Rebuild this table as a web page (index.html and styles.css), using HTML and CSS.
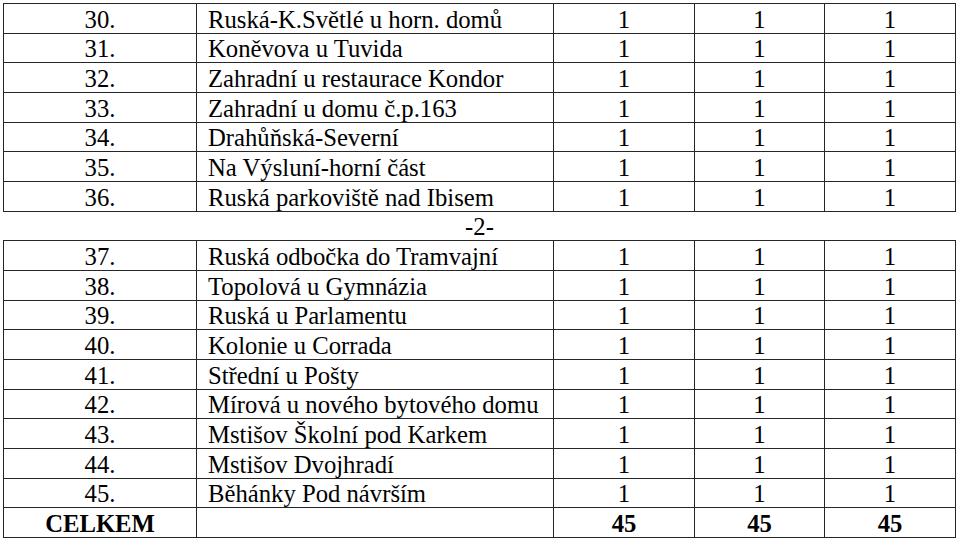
FILE: index.html
```html
<!DOCTYPE html>
<html lang="cs">
<head>
<meta charset="utf-8">
<title>Tabulka</title>
<link rel="stylesheet" href="styles.css">
</head>
<body>
<table class="sheet">
  <colgroup>
    <col class="c-no"><col class="c-name"><col class="c-v"><col class="c-v2"><col class="c-v3">
  </colgroup>
  <tbody>
    <tr><td class="no">30.</td><td class="name">Ruská-K.Světlé u horn. domů</td><td class="v">1</td><td class="v">1</td><td class="v">1</td></tr>
    <tr><td class="no">31.</td><td class="name">Koněvova u Tuvida</td><td class="v">1</td><td class="v">1</td><td class="v">1</td></tr>
    <tr><td class="no">32.</td><td class="name">Zahradní u restaurace Kondor</td><td class="v">1</td><td class="v">1</td><td class="v">1</td></tr>
    <tr><td class="no">33.</td><td class="name">Zahradní u domu č.p.163</td><td class="v">1</td><td class="v">1</td><td class="v">1</td></tr>
    <tr><td class="no">34.</td><td class="name">Drahůňská-Severní</td><td class="v">1</td><td class="v">1</td><td class="v">1</td></tr>
    <tr><td class="no">35.</td><td class="name">Na Výsluní-horní část</td><td class="v">1</td><td class="v">1</td><td class="v">1</td></tr>
    <tr><td class="no">36.</td><td class="name">Ruská parkoviště nad Ibisem</td><td class="v">1</td><td class="v">1</td><td class="v">1</td></tr>
    <tr class="page"><td colspan="5">-2-</td></tr>
    <tr><td class="no">37.</td><td class="name">Ruská odbočka do Tramvajní</td><td class="v">1</td><td class="v">1</td><td class="v">1</td></tr>
    <tr><td class="no">38.</td><td class="name">Topolová u Gymnázia</td><td class="v">1</td><td class="v">1</td><td class="v">1</td></tr>
    <tr><td class="no">39.</td><td class="name">Ruská u Parlamentu</td><td class="v">1</td><td class="v">1</td><td class="v">1</td></tr>
    <tr><td class="no">40.</td><td class="name">Kolonie u Corrada</td><td class="v">1</td><td class="v">1</td><td class="v">1</td></tr>
    <tr><td class="no">41.</td><td class="name">Střední u Pošty</td><td class="v">1</td><td class="v">1</td><td class="v">1</td></tr>
    <tr><td class="no">42.</td><td class="name">Mírová u nového bytového domu</td><td class="v">1</td><td class="v">1</td><td class="v">1</td></tr>
    <tr><td class="no">43.</td><td class="name">Mstišov Školní pod Karkem</td><td class="v">1</td><td class="v">1</td><td class="v">1</td></tr>
    <tr><td class="no">44.</td><td class="name">Mstišov Dvojhradí</td><td class="v">1</td><td class="v">1</td><td class="v">1</td></tr>
    <tr><td class="no">45.</td><td class="name">Běhánky Pod návrším</td><td class="v">1</td><td class="v">1</td><td class="v">1</td></tr>
    <tr class="total"><td class="no">CELKEM</td><td class="name"></td><td class="v">45</td><td class="v">45</td><td class="v">45</td></tr>
  </tbody>
</table>
</body>
</html>
```
FILE: styles.css
```css
html, body {
  margin: 0;
  background: #fff;
}

body {
  padding: 3px 0 0 3px;
  font-family: "Liberation Serif", "Times New Roman", serif;
  font-size: 24.7px;
  color: #000;
}

.sheet {
  border-collapse: collapse;
  table-layout: fixed;
  width: 953px;
}

.c-no { width: 193px; }
.c-name { width: 357px; }
.c-v { width: 141px; }
.c-v2 { width: 130px; }
.c-v3 { width: 131px; }

.sheet tr {
  height: 29.67px;
}

.sheet td {
  border: 1px solid #262626;
  padding: 0;
  line-height: 27px;
  vertical-align: bottom;
  white-space: nowrap;
  overflow: visible;
}

.sheet .no,
.sheet .v {
  text-align: center;
}

.sheet .name {
  text-align: left;
  padding-left: 11px;
}

.sheet .page td {
  border-left: none;
  border-right: none;
  text-align: center;
}

.sheet .total td {
  font-weight: bold;
}
```
